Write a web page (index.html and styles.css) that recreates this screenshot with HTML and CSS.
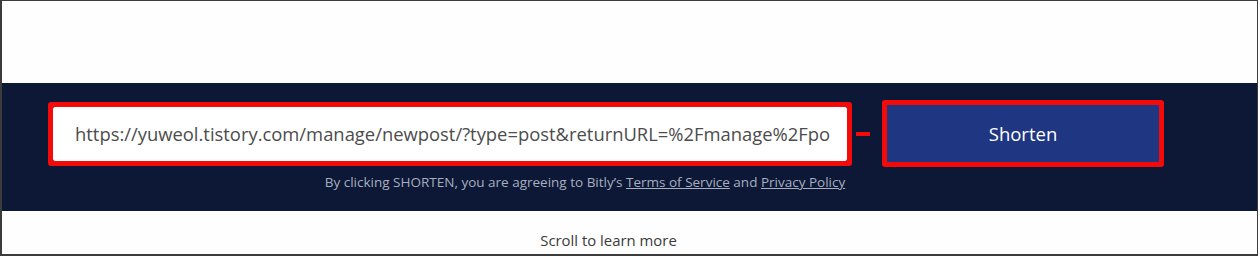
FILE: index.html
```html
<!DOCTYPE html>
<html lang="en">
<head>
<meta charset="utf-8">
<title>Bitly shorten</title>
<link rel="stylesheet" href="styles.css">
</head>
<body>
<div class="frame">
  <div class="top"></div>
  <section class="band">
    <div class="row">
      <div class="mark mark-input">
        <div class="url-input"><div class="url-text">https://yuweol.tistory.com/manage/newpost/?type=post&amp;returnURL=%2Fmanage%2Fpo</div></div>
      </div>
      <span class="connector"></span>
      <div class="mark mark-button">
        <button class="shorten" type="button">Shorten</button>
      </div>
    </div>
    <p class="disclaimer">By clicking SHORTEN, you are agreeing to Bitly’s <a href="#">Terms of Service</a> and <a href="#">Privacy Policy</a></p>
  </section>
  <div class="bottom">Scroll to learn more</div>
</div>
</body>
</html>
```

FILE: styles.css
```css
html, body {
  margin: 0;
  padding: 0;
  background: #ffffff;
}

body {
  font-family: "Open Sans", "Liberation Sans", sans-serif;
}

.frame {
  box-sizing: border-box;
  width: 1258px;
  height: 256px;
  border: 1px solid #3c3c3c;
  border-left-width: 2px;
  border-bottom-width: 2px;
  display: flex;
  flex-direction: column;
  overflow: hidden;
}

.top {
  height: 82px;
  background: #fefefe;
}

.band {
  height: 128px;
  background: #0c1835;
  padding-top: 17px;
  box-sizing: border-box;
}

.row {
  display: flex;
  align-items: center;
  padding-left: 46px;
}

.mark {
  box-sizing: border-box;
  border: 5px solid #f50a0a;
  border-radius: 3px;
}

.mark-input {
  width: 804px;
  height: 64px;
  margin-top: 1px;
}

.url-input {
  box-sizing: border-box;
  height: 100%;
  background: #ffffff;
  border-radius: 2px;
  padding: 0 16px 0 22px;
  display: flex;
  align-items: center;
}

.url-text {
  flex: 1;
  min-width: 0;
  overflow: hidden;
  white-space: nowrap;
  font-size: 18.4px;
  line-height: 24px;
  color: #4c4c4c;
}

.connector {
  width: 14px;
  height: 4px;
  margin: 0 12px 0 4px;
  background: #f50a0a;
}

.mark-button {
  width: 282px;
  height: 67px;
}

.shorten {
  display: block;
  width: 100%;
  height: 100%;
  border: 0;
  margin: 0;
  background: #1f3683;
  color: #ffffff;
  font-family: "Open Sans", "Liberation Sans", sans-serif;
  font-size: 18.5px;
  font-weight: 500;
  padding: 0;
}

.disclaimer {
  margin: 7px 0 0 48px;
  width: 1070px;
  text-align: center;
  font-size: 13.5px;
  line-height: 16px;
  color: #a7aec0;
}

.disclaimer a {
  color: #a7aec0;
  text-decoration: underline;
}

.bottom {
  flex: 1;
  background: #fefefe;
  padding: 21px 42px 0 0;
  text-align: center;
  font-size: 14.9px;
  line-height: 16px;
  color: #3a3a3a;
}
```
